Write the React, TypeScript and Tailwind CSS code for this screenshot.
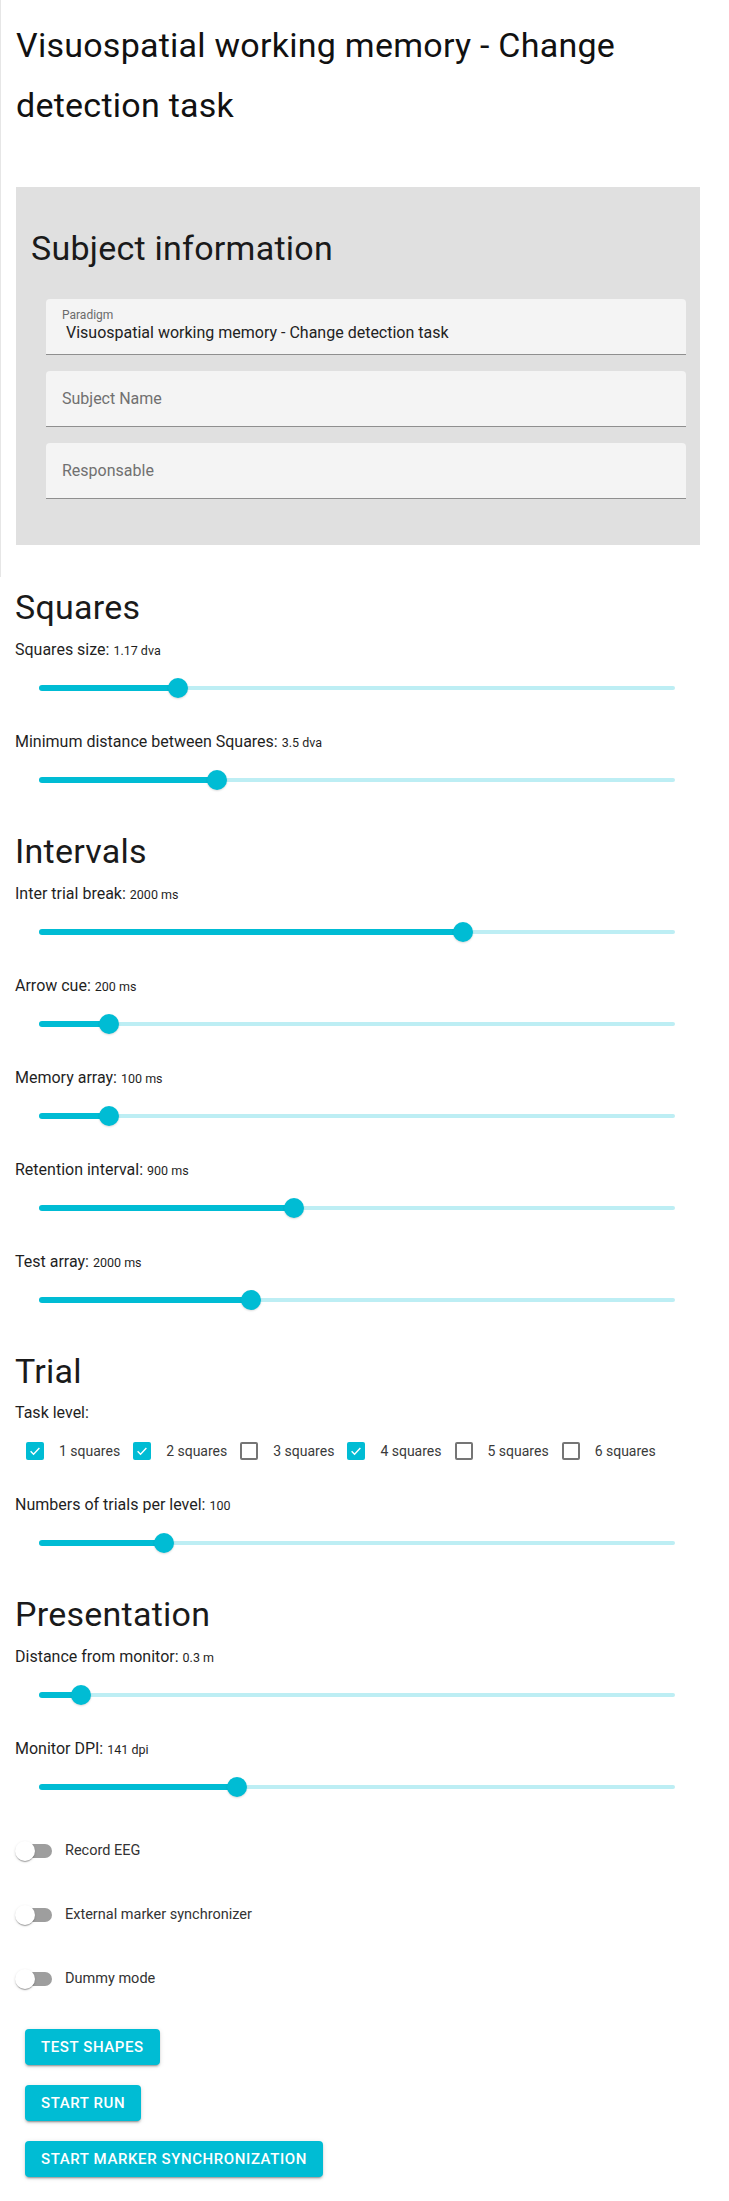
import React from "react";

type SliderItem = {
  label: string;
  value: string;
  pos: number;
};

const squares: SliderItem[] = [
  { label: "Squares size:", value: "1.17 dva", pos: 0.2186 },
  { label: "Minimum distance between Squares:", value: "3.5 dva", pos: 0.28 },
];

const intervals: SliderItem[] = [
  { label: "Inter trial break:", value: "2000 ms", pos: 0.667 },
  { label: "Arrow cue:", value: "200 ms", pos: 0.1095 },
  { label: "Memory array:", value: "100 ms", pos: 0.1095 },
  { label: "Retention interval:", value: "900 ms", pos: 0.4004 },
  { label: "Test array:", value: "2000 ms", pos: 0.334 },
];

const presentation: SliderItem[] = [
  { label: "Distance from monitor:", value: "0.3 m", pos: 0.0668 },
  { label: "Monitor DPI:", value: "141 dpi", pos: 0.312 },
];

const levels = [
  { label: "1 squares", checked: true },
  { label: "2 squares", checked: true },
  { label: "3 squares", checked: false },
  { label: "4 squares", checked: true },
  { label: "5 squares", checked: false },
  { label: "6 squares", checked: false },
];

const SectionTitle = ({ children }: { children: React.ReactNode }) => (
  <h2 className="text-[34px] leading-[60px] font-normal tracking-[0.00735em] text-[#1a1a1a]">
    {children}
  </h2>
);

const SliderField = ({ label, value, pos }: SliderItem) => {
  const pct = `${pos * 100}%`;
  return (
    <div>
      <div className="h-[25px] pt-[1px] text-[16px] leading-[24px] text-[#1f1f1f]">
        {label} <span className="text-[12.5px] leading-none">{value}</span>
      </div>
      <div className="h-[67px] px-[24px] pt-[16px]">
        <div className="relative h-[20px]">
          <div className="absolute left-0 right-0 top-[8px] h-[4px] rounded-full bg-[#bdeef4]" />
          <div
            className="absolute left-0 top-[7px] h-[6px] rounded-full bg-[#00bcd4]"
            style={{ width: pct }}
          />
          <div
            className="absolute top-0 h-[20px] w-[20px] -translate-x-1/2 rounded-full bg-[#00bcd4] shadow-[0_1px_2px_rgba(0,0,0,0.15)]"
            style={{ left: pct }}
          />
        </div>
      </div>
    </div>
  );
};

const FilledField = ({ label, value }: { label?: string; value: string }) => (
  <div className="h-[56px] rounded-t-[4px] border-b border-[#8f8f8f] bg-[#f4f4f4]">
    {label ? (
      <div className="pt-[8px] pl-[16px]">
        <div className="text-[12px] leading-[16px] text-[#6b6b6b]">{label}</div>
        <div className="pl-[4px] text-[16px] leading-[20px] text-[#222]">{value}</div>
      </div>
    ) : (
      <div className="flex h-full items-center pl-[16px] text-[16px] leading-[24px] text-[#707070]">
        {value}
      </div>
    )}
  </div>
);

const Checkbox = ({ checked }: { checked: boolean }) =>
  checked ? (
    <span className="flex h-[18px] w-[18px] items-center justify-center rounded-[2px] bg-[#00bcd4]">
      <svg width="14" height="14" viewBox="0 0 24 24" fill="none">
        <path d="M4.5 12.5l5 5L19.5 7" stroke="white" strokeWidth="2.4" />
      </svg>
    </span>
  ) : (
    <span className="h-[18px] w-[18px] rounded-[2px] border-2 border-[#757575] bg-white" />
  );

const Toggle = ({ label }: { label: string }) => (
  <div className="flex h-[38px] items-center">
    <div className="relative ml-[18px] mr-[13px] h-[14px] w-[34px] rounded-full bg-[#9e9e9e]">
      <div className="absolute left-[-3px] top-[-3px] h-[20px] w-[20px] rounded-full bg-white shadow-[0_2px_1px_-1px_rgba(0,0,0,0.2),0_1px_1px_0_rgba(0,0,0,0.14),0_1px_3px_0_rgba(0,0,0,0.12)]" />
    </div>
    <span className="text-[14.5px] text-[#333]">{label}</span>
  </div>
);

const ActionButton = ({ children }: { children: React.ReactNode }) => (
  <button className="h-[36px] rounded-[4px] bg-[#00bcd4] px-[16px] text-[15px] font-medium uppercase tracking-[0.04em] text-white shadow-[0_3px_1px_-2px_rgba(0,0,0,0.2),0_2px_2px_0_rgba(0,0,0,0.14),0_1px_5px_0_rgba(0,0,0,0.12)]">
    {children}
  </button>
);

export default function App() {
  return (
    <div className="min-h-screen bg-white pb-[24px] font-['Roboto','Liberation_Sans',sans-serif] text-[#1a1a1a]">
      <div className="border-l border-[#e6e6e6] pb-[32px]">
        <h1 className="pl-[15px] pr-[30px] pt-[15px] text-[34px] leading-[60px] font-normal tracking-[0.00735em] text-[#111]">
          Visuospatial working memory - Change detection task
        </h1>
        <div className="ml-[15px] mt-[52px] w-[684px] bg-[#e0e0e0] pb-[46px] pl-[15px] pr-[14px] pt-[31px]">
          <SectionTitle>Subject information</SectionTitle>
          <div className="ml-[15px] mt-[21px] flex flex-col gap-[16px]">
            <FilledField label="Paradigm" value="Visuospatial working memory - Change detection task" />
            <FilledField value="Subject Name" />
            <FilledField value="Responsable" />
          </div>
        </div>
      </div>

      <div className="pl-[15px] pr-[30px]">
        <SectionTitle>Squares</SectionTitle>
        {squares.map((s) => (
          <SliderField key={s.label} {...s} />
        ))}

        <SectionTitle>Intervals</SectionTitle>
        {intervals.map((s) => (
          <SliderField key={s.label} {...s} />
        ))}

        <SectionTitle>Trial</SectionTitle>
        <div className="h-[24px] text-[16px] leading-[24px] text-[#1f1f1f]">Task level:</div>
        <div className="mb-[20px] mt-[5px] flex h-[42px] items-center pl-[11px]">
          {levels.map((l) => (
            <div key={l.label} className="mr-[13px] flex items-center">
              <Checkbox checked={l.checked} />
              <span className="ml-[15px] text-[14px] text-[#3a3a3a]">{l.label}</span>
            </div>
          ))}
        </div>
        <SliderField label="Numbers of trials per level:" value="100" pos={0.197} />

        <SectionTitle>Presentation</SectionTitle>
        {presentation.map((s) => (
          <SliderField key={s.label} {...s} />
        ))}

        <div className="-ml-[15px] mt-[4px] flex flex-col gap-[26px]">
          <Toggle label="Record EEG" />
          <Toggle label="External marker synchronizer" />
          <Toggle label="Dummy mode" />
        </div>

        <div className="ml-[10px] mt-[31px] flex flex-col items-start gap-[20px]">
          <ActionButton>Test shapes</ActionButton>
          <ActionButton>Start run</ActionButton>
          <ActionButton>Start marker synchronization</ActionButton>
        </div>
      </div>
    </div>
  );
}
